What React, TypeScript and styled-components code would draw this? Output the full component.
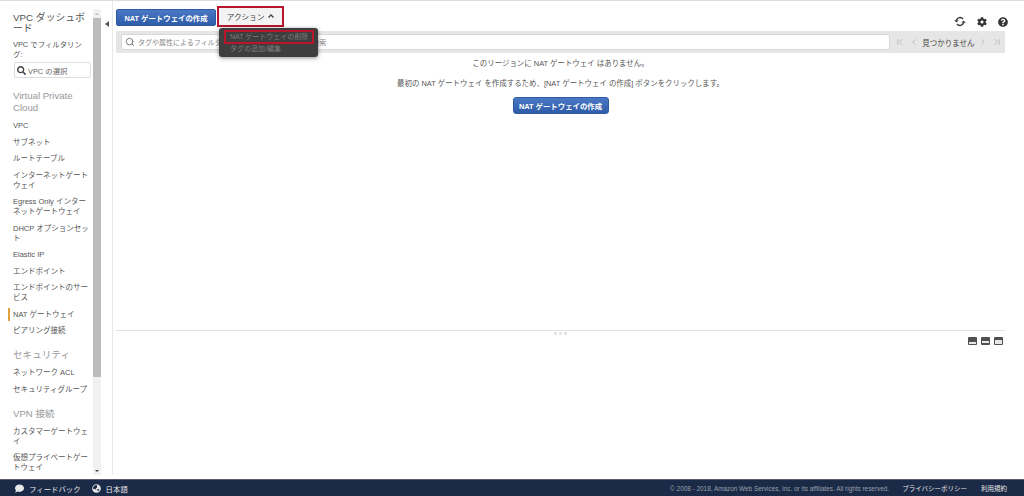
import React from "react";
import styled, { createGlobalStyle } from "styled-components";
import { FaComment, FaGlobeAsia, FaCog, FaQuestionCircle, FaSearch } from "react-icons/fa";
import { Search, ChevronLeft, ChevronRight, ChevronFirst, ChevronLast } from "lucide-react";

const GlobalStyle = createGlobalStyle`
  html, body {
    margin: 0;
    padding: 0;
    background: #fff;
    overflow: hidden;
  }
  body {
    font-family: "Liberation Sans", "Noto Sans CJK JP", sans-serif;
    color: #444;
  }
`;

const Page = styled.div`
  width: 1024px;
  height: 496px;
  display: flex;
  flex-direction: column;
  border-top: 1px solid #dcdcdc;
  box-sizing: border-box;
`;

const Body = styled.div`
  flex: 1;
  min-height: 0;
  display: flex;
`;

const Sidebar = styled.nav`
  width: 93px;
  height: 473px;
  flex: none;
  overflow: hidden;
  box-sizing: border-box;
  padding: 11px 0 0 13px;
  line-break: anywhere;
`;

const DashTitle = styled.div`
  font-size: 9.8px;
  line-height: 11px;
  color: #555;
  width: 72px;
  margin-bottom: 6px;
`;

const FilterLabel = styled.div`
  font-size: 7.4px;
  line-height: 10px;
  color: #555;
  width: 72px;
`;

const VpcSelect = styled.div`
  width: 77px;
  height: 16px;
  margin: 2px 0 0 1px;
  border: 1px solid #ddd;
  border-radius: 2px;
  display: flex;
  align-items: center;
  gap: 2px;
  padding-left: 2px;
  box-sizing: border-box;
  font-size: 7.4px;
  color: #666;
  svg {
    color: #444;
  }
`;

const SectionTitle = styled.div<{ $top: number }>`
  font-size: 9.6px;
  line-height: 12px;
  line-break: auto;
  color: #999;
  margin: ${(p) => p.$top}px 0 3.75px;
  width: 76px;
`;

const NavItem = styled.div<{ $active?: boolean }>`
  position: relative;
  font-size: 7.5px;
  line-height: 10px;
  color: #555;
  padding: 3.25px 0;
  width: 77px;
  ${(p) =>
    p.$active &&
    `&::before {
      content: "";
      position: absolute;
      left: -5px;
      top: 2px;
      bottom: 2px;
      width: 2px;
      background: #e0a23c;
    }`}
`;

const ScrollTrack = styled.div`
  width: 8px;
  flex: none;
  margin-top: 8px;
  height: 466px;
  background: #f1f1f1;
  display: flex;
  flex-direction: column;
  align-items: center;
`;

const ScrollArrow = styled.div<{ $up?: boolean }>`
  flex: none;
  height: 9px;
  width: 8px;
  display: flex;
  align-items: center;
  justify-content: center;
  &::after {
    content: "";
    border-left: 2px solid transparent;
    border-right: 2px solid transparent;
    ${(p) => (p.$up ? "border-bottom: 2px solid #bbb;" : "border-top: 2px solid #444;")}
  }
`;

const ScrollThumb = styled.div`
  width: 8px;
  height: 359px;
  flex: none;
  background: #bcbcbc;
`;

const ScrollRest = styled.div`
  flex: 1;
`;

const CollapseColumn = styled.div`
  width: 11px;
  margin-left: 1px;
  flex: none;
  height: 474px;
  border-right: 1px solid #e8e8e8;
  display: flex;
  justify-content: center;
  padding-top: 20px;
  box-sizing: border-box;
`;

const CollapseArrow = styled.div`
  width: 0;
  height: 0;
  border-top: 3px solid transparent;
  border-bottom: 3px solid transparent;
  border-right: 4px solid #555;
`;

const Main = styled.main`
  flex: 1;
  min-width: 0;
  display: flex;
  flex-direction: column;
  padding-left: 3px;
`;

const Toolbar = styled.div`
  height: 16px;
  margin-top: 8px;
  display: flex;
  align-items: center;
  width: 892px;
`;

const PrimaryButton = styled.button`
  background: linear-gradient(#4a78c4, #2f5ca8);
  border: 1px solid #2d5aa3;
  border-radius: 2px;
  color: #fff;
  font-family: inherit;
  font-weight: 700;
  font-size: 7.4px;
  height: 17px;
  padding: 0;
  width: 100px;
  box-sizing: border-box;
  white-space: nowrap;
`;

const ActionWrap = styled.div`
  position: relative;
  margin: -2px 0 0 1px;
`;

const ActionButton = styled.div`
  width: 63px;
  height: 17px;
  box-sizing: content-box;
  border: 2px solid #b7172c;
  background: #f3f3f3;
  color: #444;
  font-size: 7.6px;
  display: flex;
  align-items: center;
  justify-content: center;
  gap: 4px;
`;

const Caret = styled.svg`
  display: block;
`;

const Menu = styled.div`
  position: absolute;
  left: 2px;
  top: 22px;
  width: 99px;
  height: 29px;
  box-sizing: border-box;
  background: #3e3e3e;
  border-radius: 3px;
  box-shadow: 0 1px 4px rgba(0, 0, 0, 0.45);
  padding: 2px 4px 0 5px;
  z-index: 3;
  font-size: 7px;
  color: #7d7d7d;
`;

const MenuItem = styled.div<{ $selected?: boolean }>`
  white-space: nowrap;
  box-sizing: border-box;
  height: ${(p) => (p.$selected ? "14px" : "11px")};
  line-height: ${(p) => (p.$selected ? "10px" : "11px")};
  padding-left: ${(p) => (p.$selected ? "4px" : "6px")};
  margin-top: ${(p) => (p.$selected ? "0" : "-1px")};
  ${(p) => p.$selected && "border: 2px solid #b7172c;"}
`;

const ToolIcons = styled.div`
  margin-left: auto;
  display: flex;
  align-items: center;
  gap: 11px;
  color: #333;
  padding-top: 9px;
`;

const FilterBar = styled.div`
  margin-top: 6px;
  width: 889px;
  height: 22px;
  background: #e6e6e6;
  display: flex;
  align-items: center;
  padding: 0 3px 0 5px;
  box-sizing: border-box;
`;

const SearchField = styled.div`
  width: 769px;
  height: 16px;
  flex: none;
  background: #fff;
  border: 1px solid #d8d8d8;
  border-radius: 2px;
  box-sizing: border-box;
  display: flex;
  align-items: center;
  gap: 3px;
  padding-left: 3px;
  font-size: 7px;
  color: #888;
  white-space: nowrap;
  svg {
    color: #666;
  }
`;

const Pager = styled.div`
  flex: 1;
  display: flex;
  align-items: center;
  justify-content: space-between;
  padding-left: 5px;
  color: #b5b5b5;
  font-size: 7.5px;
`;

const PagerLabel = styled.span`
  color: #444;
  white-space: nowrap;
`;

const EmptyState = styled.section`
  height: 278px;
  width: 889px;
  flex: none;
  border-bottom: 1px solid #e2e2e2;
  box-sizing: border-box;
  display: flex;
  flex-direction: column;
  align-items: center;
  font-size: 7.45px;
  color: #555;
  line-height: 12px;
  padding-top: 5px;
`;

const EmptyLine = styled.p`
  margin: 0 0 8px;
`;

const CenterButton = styled(PrimaryButton)`
  width: 96px;
  height: 17px;
  border-radius: 3px;
  margin-top: -1px;
`;

const Grip = styled.div`
  width: 889px;
  height: 3px;
  display: flex;
  justify-content: center;
  gap: 2px;
  margin-top: 1px;
`;

const GripDot = styled.span`
  width: 3px;
  height: 3px;
  background: #e0e0e0;
  border-radius: 1px;
`;

const PaneIcons = styled.div`
  width: 887px;
  display: flex;
  justify-content: flex-end;
  gap: 4px;
  margin-top: 2px;
`;

const PaneIcon = styled.div<{ $slot: "bottom" | "middle" | "top" }>`
  width: 9px;
  height: 8px;
  background: #505050;
  border-radius: 1px;
  display: flex;
  padding: ${(p) => (p.$slot === "bottom" ? "5px 1px 1px" : p.$slot === "middle" ? "4px 1px 2px" : "3px 1px 1px")};
  box-sizing: border-box;
  &::after {
    content: "";
    flex: 1;
    background: #e8e8e8;
  }
`;

const Footer = styled.footer`
  height: 17px;
  flex: none;
  background: #1a2a47;
  border-top: 1px solid #555c6c;
  box-sizing: border-box;
  display: flex;
  align-items: center;
  color: #e8e8e8;
  font-size: 7.4px;
  padding: 0 17px 0 15px;
`;

const FooterLink = styled.span<{ $gap?: number }>`
  display: flex;
  align-items: center;
  gap: 5px;
  margin-right: ${(p) => p.$gap ?? 0}px;
  white-space: nowrap;
`;

const LegalLink = styled(FooterLink)`
  font-size: 6.5px;
`;

const Copyright = styled.span`
  margin-left: auto;
  color: #9aa0ab;
  font-size: 6.4px;
  margin-right: 13px;
  white-space: nowrap;
`;

const sections = [
  {
    title: "Virtual Private Cloud",
    top: 12,
    items: [
      "VPC",
      "サブネット",
      "ルートテーブル",
      "インターネットゲートウェイ",
      "Egress Only インターネットゲートウェイ",
      "DHCP オプションセット",
      "Elastic IP",
      "エンドポイント",
      "エンドポイントのサービス",
      "NAT ゲートウェイ",
      "ピアリング接続",
    ],
  },
  { title: "セキュリティ", top: 9.75, items: ["ネットワーク ACL", "セキュリティグループ"] },
  { title: "VPN 接続", top: 9.75, items: ["カスタマーゲートウェイ", "仮想プライベートゲートウェイ"] },
];

function RefreshIcon() {
  return (
    <svg width="12" height="11" viewBox="0 0 12 11" fill="none">
      <path d="M2.4 4.2 A3.8 3.8 0 0 1 9 3" stroke="#333" strokeWidth="1.4" />
      <path d="M9.6 6.8 A3.8 3.8 0 0 1 3 8" stroke="#333" strokeWidth="1.4" />
      <path d="M0.2 4.2 H4.6 L2.4 6.6 Z" fill="#333" />
      <path d="M7.4 6.8 H11.8 L9.6 4.4 Z" fill="#333" />
    </svg>
  );
}

export default function App() {
  return (
    <>
      <GlobalStyle />
      <Page>
        <Body>
          <Sidebar>
            <DashTitle>VPC ダッシュボード</DashTitle>
            <FilterLabel>VPC でフィルタリング:</FilterLabel>
            <VpcSelect>
              <FaSearch size={9} />
              VPC の選択
            </VpcSelect>
            {sections.map((s) => (
              <React.Fragment key={s.title}>
                <SectionTitle $top={s.top}>{s.title}</SectionTitle>
                {s.items.map((item) => (
                  <NavItem key={item} $active={item === "NAT ゲートウェイ"}>
                    {item}
                  </NavItem>
                ))}
              </React.Fragment>
            ))}
          </Sidebar>
          <ScrollTrack>
            <ScrollArrow $up />
            <ScrollThumb />
            <ScrollRest />
            <ScrollArrow />
          </ScrollTrack>
          <CollapseColumn>
            <CollapseArrow />
          </CollapseColumn>
          <Main>
            <Toolbar>
              <PrimaryButton>NAT ゲートウェイの作成</PrimaryButton>
              <ActionWrap>
                <ActionButton>
                  アクション
                  <Caret width="6" height="4" viewBox="0 0 6 4">
                    <path d="M0.5 3.5 L3 1 L5.5 3.5" fill="none" stroke="#444" strokeWidth="1.3" />
                  </Caret>
                </ActionButton>
                <Menu>
                  <MenuItem $selected>NAT ゲートウェイの削除</MenuItem>
                  <MenuItem>タグの追加/編集</MenuItem>
                </Menu>
              </ActionWrap>
              <ToolIcons>
                <RefreshIcon />
                <FaCog size={10} />
                <FaQuestionCircle size={10} />
              </ToolIcons>
            </Toolbar>
            <FilterBar>
              <SearchField>
                <Search size={10} />
                タグや属性によるフィルタリング、またはキーワードで検索
              </SearchField>
              <Pager>
                <ChevronFirst size={10} />
                <ChevronLeft size={10} />
                <PagerLabel>見つかりません</PagerLabel>
                <ChevronRight size={10} />
                <ChevronLast size={10} />
              </Pager>
            </FilterBar>
            <EmptyState>
              <EmptyLine>このリージョンに NAT ゲートウェイ はありません。</EmptyLine>
              <EmptyLine>最初の NAT ゲートウェイ を作成するため、[NAT ゲートウェイ の作成] ボタンをクリックします。</EmptyLine>
              <CenterButton>NAT ゲートウェイの作成</CenterButton>
            </EmptyState>
            <Grip>
              <GripDot />
              <GripDot />
              <GripDot />
            </Grip>
            <PaneIcons>
              <PaneIcon $slot="bottom" />
              <PaneIcon $slot="middle" />
              <PaneIcon $slot="top" />
            </PaneIcons>
          </Main>
        </Body>
        <Footer>
          <FooterLink $gap={11}>
            <FaComment size={9} />
            フィードバック
          </FooterLink>
          <FooterLink>
            <FaGlobeAsia size={9} />
            日本語
          </FooterLink>
          <Copyright>© 2008 - 2018, Amazon Web Services, Inc. or its affiliates. All rights reserved.</Copyright>
          <LegalLink $gap={14}>プライバシーポリシー</LegalLink>
          <LegalLink>利用規約</LegalLink>
        </Footer>
      </Page>
    </>
  );
}
